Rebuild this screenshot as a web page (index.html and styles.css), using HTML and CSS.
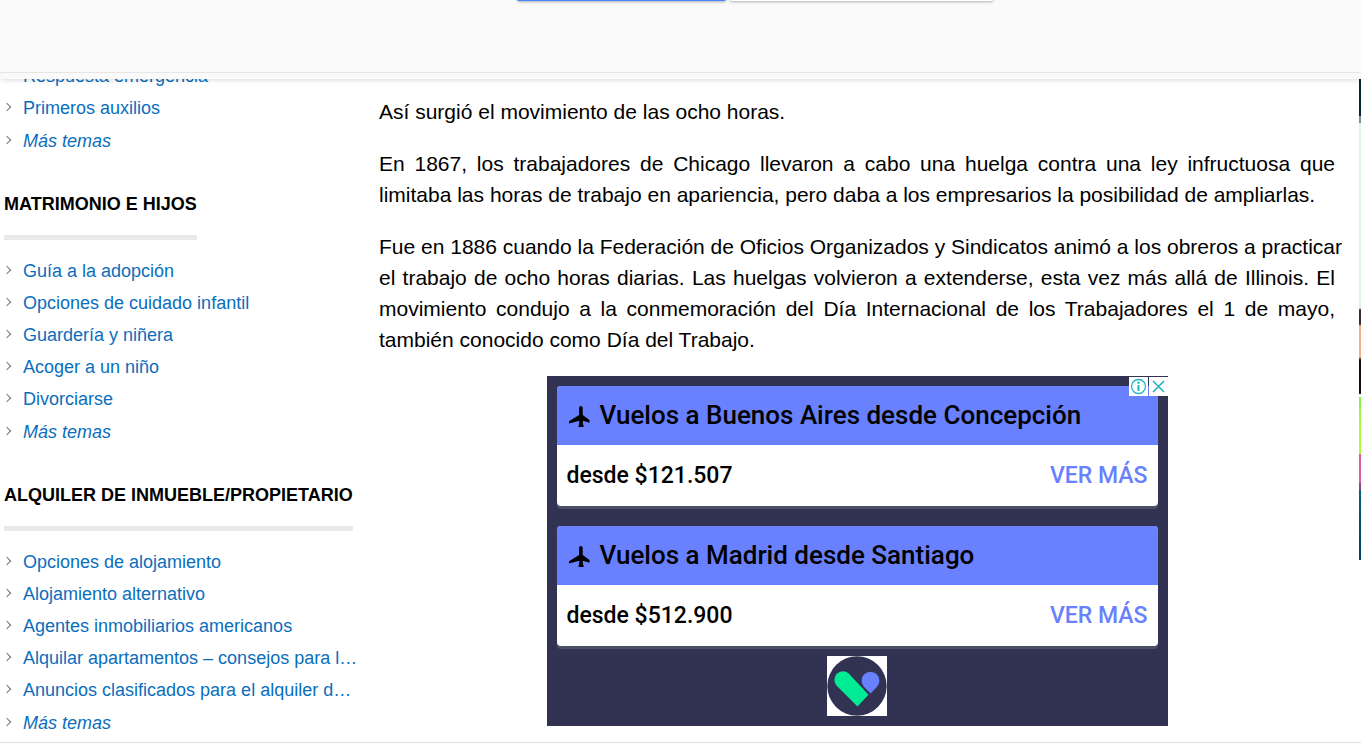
FILE: index.html
```html
<!DOCTYPE html>
<html lang="es">
<head>
    <meta charset="UTF-8">
    <title>Día del Trabajo</title>
    <link rel="stylesheet" href="styles.css">
</head>
<body>
    <header class="topbar">
        <div class="topbar-buttons">
            <button class="btn btn-primary" type="button" aria-label="Continuar"></button>
            <button class="btn btn-plain" type="button" aria-label="Cerrar"></button>
        </div>
        <div class="topbar-edge"></div>
    </header>
    <main class="page">
        <nav class="sidebar">
            <ul class="links">
                <li><a href="#">Respuesta emergencia</a></li>
                <li><a href="#">Primeros auxilios</a></li>
                <li class="more"><a href="#">Más temas</a></li>
            </ul>
            <h2>MATRIMONIO E HIJOS</h2>
            <ul class="links">
                <li><a href="#">Guía a la adopción</a></li>
                <li><a href="#">Opciones de cuidado infantil</a></li>
                <li><a href="#">Guardería y niñera</a></li>
                <li><a href="#">Acoger a un niño</a></li>
                <li><a href="#">Divorciarse</a></li>
                <li class="more"><a href="#">Más temas</a></li>
            </ul>
            <h2>ALQUILER DE INMUEBLE/PROPIETARIO</h2>
            <ul class="links">
                <li><a href="#">Opciones de alojamiento</a></li>
                <li><a href="#">Alojamiento alternativo</a></li>
                <li><a href="#">Agentes inmobiliarios americanos</a></li>
                <li><a href="#">Alquilar apartamentos – consejos para l…</a></li>
                <li><a href="#">Anuncios clasificados para el alquiler d…</a></li>
                <li class="more"><a href="#">Más temas</a></li>
            </ul>
        </nav>
        <article class="content">
            <p>Así surgió el movimiento de las ocho horas.</p>
            <p>En 1867, los trabajadores de Chicago llevaron a cabo una huelga contra una ley infructuosa que limitaba las horas de trabajo en apariencia, pero daba a los empresarios la posibilidad de ampliarlas.</p>
            <p><span class="line">Fue en 1886 cuando la Federación de Oficios Organizados y Sindicatos animó a los obreros a practicar</span> <span class="line">el trabajo de ocho horas diarias. Las huelgas volvieron a extenderse, esta vez más allá de Illinois. El</span> movimiento condujo a la conmemoración del Día Internacional de los Trabajadores el 1 de mayo, también conocido como Día del Trabajo.</p>
            <section class="ad">
                <div class="ad-choices">
                    <a href="#" aria-label="Información del anuncio">
                        <svg width="19" height="19" viewBox="0 0 19 19" fill="none" stroke="#1fb5cc">
                            <circle cx="9.500" cy="9.500" r="7" stroke-width="1.300"/>
                            <path d="M9.500 8v6" stroke-width="2"/>
                            <circle cx="9.500" cy="5.700" r="1.200" fill="#1fb5cc" stroke="none"/>
                        </svg>
                    </a>
                    <button type="button" aria-label="Cerrar anuncio">
                        <svg width="19" height="19" viewBox="0 0 19 19" fill="none" stroke="#1fb5cc" stroke-width="1.600">
                            <path d="M4 4l11 11M15 4L4 15"/>
                        </svg>
                    </button>
                </div>
                <div class="flight">
                    <h3>
                        <svg width="22" height="22" viewBox="0 0 22 22">
                            <path d="M12.900 1c1.100 0 1.800.8 1.800 1.900v7l6.800 5v2.900l-6.600-2v3.700l.7.600V22h-5v-1.900l.6-.6v-3.700L1 18.400v-2.200l10.100-6.300v-7c0-1.100.7-1.900 1.800-1.900z"/>
                        </svg>
                        Vuelos a Buenos Aires desde Concepción
                    </h3>
                    <div class="flight-body">
                        <span>desde $121.507</span>
                        <a href="#">VER MÁS</a>
                    </div>
                </div>
                <div class="flight">
                    <h3>
                        <svg width="22" height="22" viewBox="0 0 22 22">
                            <path d="M12.900 1c1.100 0 1.800.8 1.800 1.900v7l6.800 5v2.900l-6.600-2v3.700l.7.600V22h-5v-1.900l.6-.6v-3.700L1 18.400v-2.200l10.100-6.300v-7c0-1.100.7-1.900 1.800-1.900z"/>
                        </svg>
                        Vuelos a Madrid desde Santiago
                    </h3>
                    <div class="flight-body">
                        <span>desde $512.900</span>
                        <a href="#">VER MÁS</a>
                    </div>
                </div>
                <svg class="ad-logo" width="60" height="60" viewBox="0 0 60 60">
                    <rect width="60" height="60" fill="#fff"/>
                    <circle cx="30" cy="30" r="29.700" fill="#323253"/>
                    <path d="M9.700 29.700a8.600 8.600 0 0 1 12-12.300L41.500 38.800 30.500 50.500z" fill="#00eb93"/>
                    <path d="M43.500 37.500l-6.300-6.600a8.900 8.900 0 1 1 12.600 0z" fill="#6980ff"/>
                </svg>
            </section>
        </article>
        <aside class="photo"></aside>
    </main>
    <footer class="bottom"></footer>
</body>
</html>
```

FILE: styles.css
```css
* {
    margin: 0;
    padding: 0;
    box-sizing: border-box;
}
html {
    overflow: hidden;
}
body {
    background: #fff;
    color: #000;
    font-family: Arial, "Liberation Sans", sans-serif;
}
ul {
    list-style-type: none;
}
a {
    text-decoration: none;
}

/* top bar, slides over the page */
.topbar {
    position: fixed;
    top: -35px;
    left: 0;
    right: 0;
    z-index: 10;
    background: #fafafa;
    box-shadow: 0 1px 5px rgba(0, 0, 0, 0.15);
}
.topbar-buttons {
    display: flex;
    justify-content: center;
    gap: 4px;
    height: 108px;
    padding-left: 149px;
    border-bottom: 1px solid #e6e6e6;
}
.btn {
    height: 36px;
    border: none;
    border-radius: 2px;
    box-shadow: 0 1px 3px rgba(0, 0, 0, 0.3);
}
.btn-primary {
    width: 209px;
    background: #4285f4;
}
.btn-plain {
    width: 263px;
    background: #fff;
}
.topbar-edge {
    height: 6px;
}

.page {
    display: grid;
    grid-template-columns: 355px minmax(0, 1fr) 2px;
    column-gap: 24px;
    padding-top: 60px;
}

/* sidebar */
.sidebar {
    font-size: 18px;
}
.sidebar h2 {
    width: fit-content;
    margin: 32px 0 15px 4px;
    padding-bottom: 17px;
    border-bottom: 5px solid #e9e9e9;
    font-size: 18px;
    line-height: 28px;
    white-space: nowrap;
}
.links li {
    display: flex;
    align-items: center;
    height: 32px;
    padding-left: 4px;
    white-space: nowrap;
}
.links li::before {
    content: "";
    flex: none;
    width: 5px;
    height: 5px;
    margin: 0 13px 3px 0;
    border-top: 1px solid #777;
    border-right: 1px solid #777;
    transform: rotate(45deg);
}
.links a {
    color: #0a6ebd;
}
.links .more {
    height: 34px;
    font-style: italic;
}

/* article */
.content {
    padding-top: 36px;
    font-size: 21px;
    line-height: 31px;
    text-align: justify;
}
.content p {
    margin-bottom: 21px;
}
.line {
    display: block;
    white-space: nowrap;
    text-align-last: justify;
}

/* ad */
.ad {
    position: relative;
    display: flex;
    flex-direction: column;
    align-items: center;
    max-width: 621px;
    margin: 0 auto;
    padding: 10px;
    background: #323253;
    font-family: Roboto, sans-serif;
    font-weight: 500;
    text-align: left;
}
.ad-choices {
    position: absolute;
    top: 1px;
    right: 0;
    display: flex;
    gap: 1px;
}
.ad-choices a,
.ad-choices button {
    width: 19px;
    height: 19px;
    border: none;
    background: #fff;
}
.ad-choices svg {
    display: block;
}
.flight {
    width: 100%;
    margin-bottom: 20px;
    border-radius: 4px;
    background: #fff;
    box-shadow: 0 3px 0 #4c4f68;
}
.flight h3 {
    display: flex;
    align-items: center;
    gap: 10px;
    height: 59px;
    padding-left: 11px;
    border-radius: 4px 4px 0 0;
    background: #6980ff;
    font-size: 26px;
    font-weight: 500;
}
.flight-body {
    display: flex;
    align-items: center;
    justify-content: space-between;
    height: 61px;
    padding: 0 10px;
    font-size: 23px;
}
.flight-body a {
    color: #6980ff;
}
.ad-logo {
    margin-top: -10px;
}

/* edge of the photo column */
.photo {
    height: 500px;
    background: linear-gradient(#002838 56px, #7f918d 56px, #7f918d 63px, #def5e3 63px, #def5e3 248px, #3b2d30 250px, #3b2d30 264px, #f2b08e 266px, #f2b08e 297px, #160b0d 300px, #160b0d 334px, #fff 334px, #fff 337px, #7cf34a 337px, #adfa3f 364px, #adfa3f 394px, #d9619d 394px, #d9619d 422px, #844987 424px, #844987 430px, #006084 430px, #004260);
}

.bottom {
    margin-top: 2px;
    border-top: 1px solid #e0e0e0;
}
```
